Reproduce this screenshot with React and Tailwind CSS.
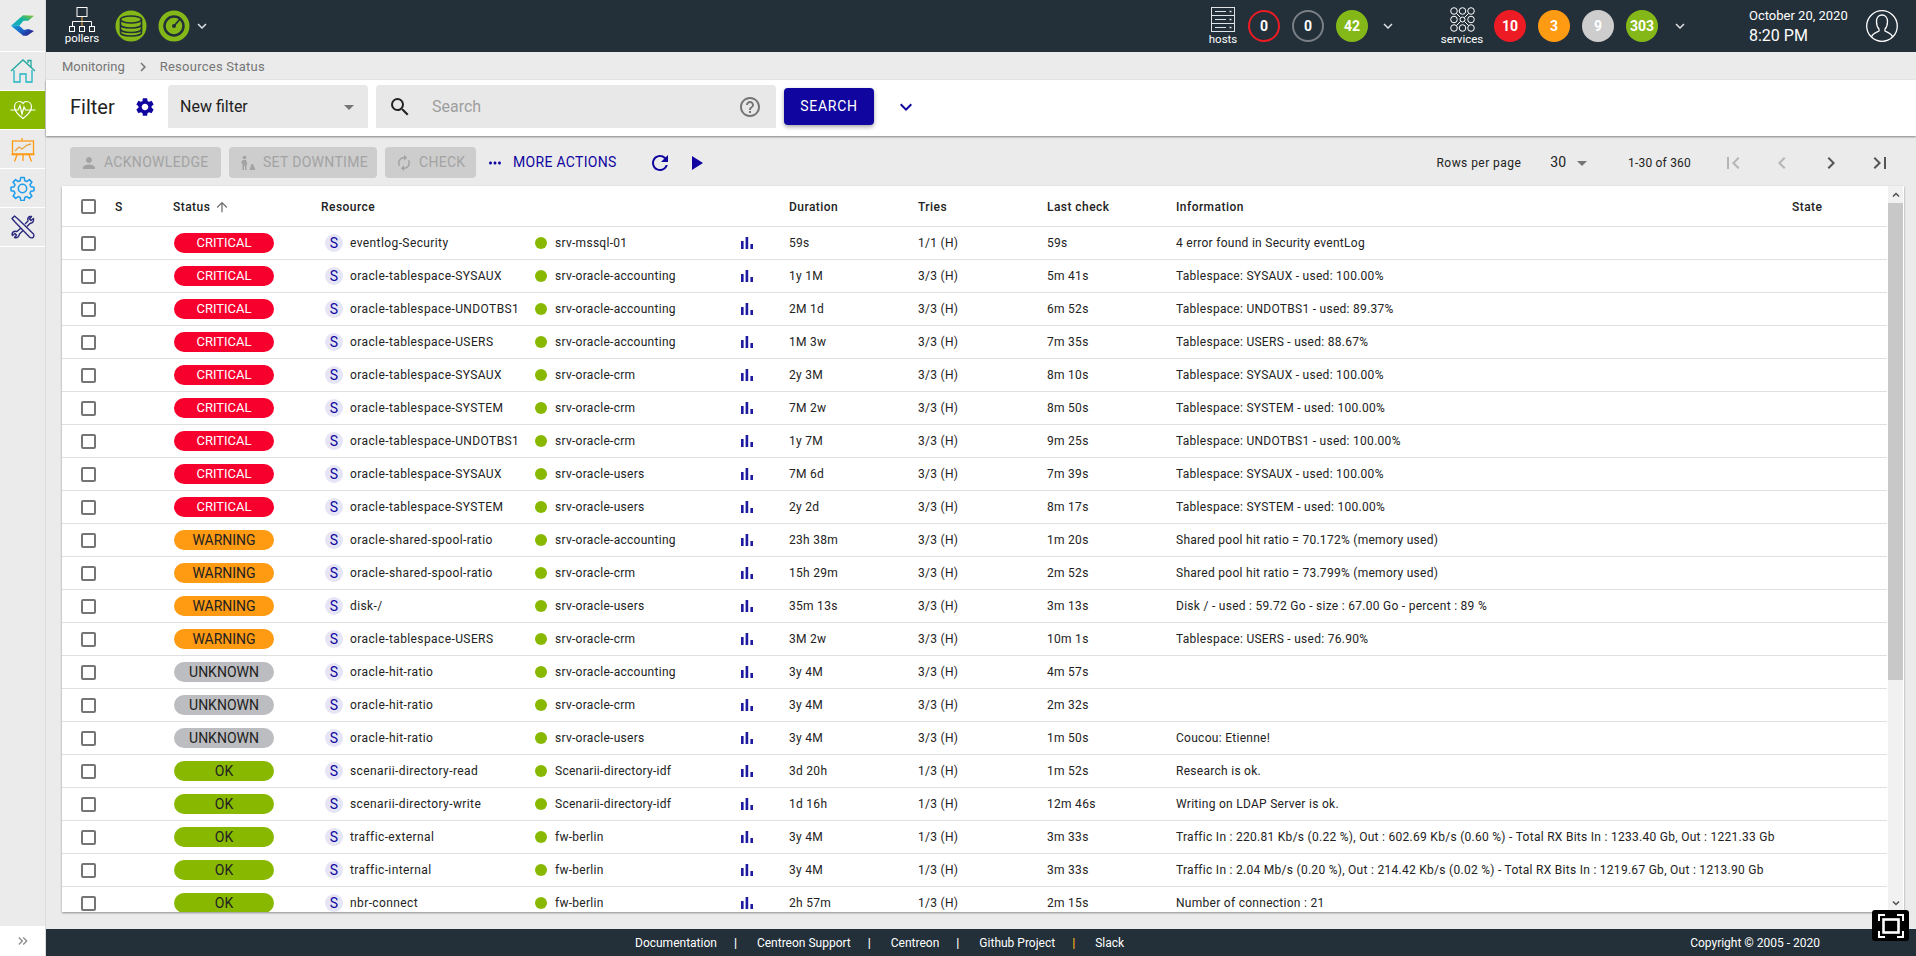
import React from "react";
import {
  MdSettings, MdSearch, MdHelpOutline, MdKeyboardArrowDown, MdPerson, MdAutorenew, MdMoreHoriz, MdRefresh,
  MdPlayArrow, MdArrowUpward, MdFirstPage, MdChevronLeft, MdChevronRight, MdLastPage, MdArrowDropDown, MdKeyboardDoubleArrowRight,
} from "react-icons/md";

const rows = [
  ["CRITICAL", "eventlog-Security", "srv-mssql-01", "59s", "1/1 (H)", "59s", "4 error found in Security eventLog"],
  ["CRITICAL", "oracle-tablespace-SYSAUX", "srv-oracle-accounting", "1y 1M", "3/3 (H)", "5m 41s", "Tablespace: SYSAUX - used: 100.00%"],
  ["CRITICAL", "oracle-tablespace-UNDOTBS1", "srv-oracle-accounting", "2M 1d", "3/3 (H)", "6m 52s", "Tablespace: UNDOTBS1 - used: 89.37%"],
  ["CRITICAL", "oracle-tablespace-USERS", "srv-oracle-accounting", "1M 3w", "3/3 (H)", "7m 35s", "Tablespace: USERS - used: 88.67%"],
  ["CRITICAL", "oracle-tablespace-SYSAUX", "srv-oracle-crm", "2y 3M", "3/3 (H)", "8m 10s", "Tablespace: SYSAUX - used: 100.00%"],
  ["CRITICAL", "oracle-tablespace-SYSTEM", "srv-oracle-crm", "7M 2w", "3/3 (H)", "8m 50s", "Tablespace: SYSTEM - used: 100.00%"],
  ["CRITICAL", "oracle-tablespace-UNDOTBS1", "srv-oracle-crm", "1y 7M", "3/3 (H)", "9m 25s", "Tablespace: UNDOTBS1 - used: 100.00%"],
  ["CRITICAL", "oracle-tablespace-SYSAUX", "srv-oracle-users", "7M 6d", "3/3 (H)", "7m 39s", "Tablespace: SYSAUX - used: 100.00%"],
  ["CRITICAL", "oracle-tablespace-SYSTEM", "srv-oracle-users", "2y 2d", "3/3 (H)", "8m 17s", "Tablespace: SYSTEM - used: 100.00%"],
  ["WARNING", "oracle-shared-spool-ratio", "srv-oracle-accounting", "23h 38m", "3/3 (H)", "1m 20s", "Shared pool hit ratio = 70.172% (memory used)"],
  ["WARNING", "oracle-shared-spool-ratio", "srv-oracle-crm", "15h 29m", "3/3 (H)", "2m 52s", "Shared pool hit ratio = 73.799% (memory used)"],
  ["WARNING", "disk-/", "srv-oracle-users", "35m 13s", "3/3 (H)", "3m 13s", "Disk / - used : 59.72 Go - size : 67.00 Go - percent : 89 %"],
  ["WARNING", "oracle-tablespace-USERS", "srv-oracle-crm", "3M 2w", "3/3 (H)", "10m 1s", "Tablespace: USERS - used: 76.90%"],
  ["UNKNOWN", "oracle-hit-ratio", "srv-oracle-accounting", "3y 4M", "3/3 (H)", "4m 57s", ""],
  ["UNKNOWN", "oracle-hit-ratio", "srv-oracle-crm", "3y 4M", "3/3 (H)", "2m 32s", ""],
  ["UNKNOWN", "oracle-hit-ratio", "srv-oracle-users", "3y 4M", "3/3 (H)", "1m 50s", "Coucou: Etienne!"],
  ["OK", "scenarii-directory-read", "Scenarii-directory-idf", "3d 20h", "1/3 (H)", "1m 52s", "Research is ok."],
  ["OK", "scenarii-directory-write", "Scenarii-directory-idf", "1d 16h", "1/3 (H)", "12m 46s", "Writing on LDAP Server is ok."],
  ["OK", "traffic-external", "fw-berlin", "3y 4M", "1/3 (H)", "3m 33s", "Traffic In : 220.81 Kb/s (0.22 %), Out : 602.69 Kb/s (0.60 %) - Total RX Bits In : 1233.40 Gb, Out : 1221.33 Gb"],
  ["OK", "traffic-internal", "fw-berlin", "3y 4M", "1/3 (H)", "3m 33s", "Traffic In : 2.04 Mb/s (0.20 %), Out : 214.42 Kb/s (0.02 %) - Total RX Bits In : 1219.67 Gb, Out : 1213.90 Gb"],
  ["OK", "nbr-connect", "fw-berlin", "2h 57m", "1/3 (H)", "2m 15s", "Number of connection : 21"],
];

const chipClass = {
  CRITICAL: "bg-[#f7002e] text-white text-[13px]",
  WARNING: "bg-[#ff9a13] text-[#222] text-[14px]",
  UNKNOWN: "bg-[#bcbdc0] text-[#222] text-[14px]",
  OK: "bg-[#88b900] text-[#222] text-[14px]",
};

const gridCols = "grid grid-cols-[53px_58px_148px_214px_206px_48px_129px_129px_129px_616px_1fr]";

function Logo() {
  return (
    <svg width="23" height="21" viewBox="11 16 23 21">
      <defs>
        <linearGradient id="lt" x1="0" y1="1" x2="1" y2="0">
          <stop offset="0" stopColor="#12a8c8" />
          <stop offset="0.55" stopColor="#12b4a4" />
          <stop offset="1" stopColor="#8fc31f" />
        </linearGradient>
        <linearGradient id="lb" x1="0" y1="0" x2="1" y2="0.6">
          <stop offset="0" stopColor="#12a8d8" />
          <stop offset="0.55" stopColor="#1a62c8" />
          <stop offset="1" stopColor="#2a2590" />
        </linearGradient>
      </defs>
      <path d="M11 26.7 L23 16.2 L34 16.7 L28.3 21.7 L23.5 21.7 L19.3 26.7 Z" fill="url(#lt)" />
      <path d="M11 26.7 L19.3 26.7 L24 31 L28.3 30 L34 32 L27 36.7 L23.3 36.7 Z" fill="url(#lb)" />
    </svg>
  );
}

function HomeIcon() {
  return (
    <svg width="26" height="24" viewBox="0 0 26 24" fill="none" strokeWidth="1.3">
      <path d="M1 12 L13 1 L25 12" stroke="#20a8a0" />
      <path d="M18 4 V1.5 H21 V8" stroke="#20a8a0" />
      <path d="M4 11 V23 H10 V15 H16 V23 H22 V11" stroke="#1fb5c4" />
    </svg>
  );
}
function HeartIcon() {
  return (
    <svg width="26" height="20" viewBox="0 0 26 20" fill="none" stroke="#fff" strokeWidth="1.2">
      <path d="M13 18.5 C7 14 4.5 11 4.5 7 C4.5 3.5 7 1.5 9.5 1.5 C11 1.5 12.3 2.2 13 3.5 C13.7 2.2 15 1.5 16.5 1.5 C19 1.5 21.5 3.5 21.5 7 C21.5 11 19 14 13 18.5 Z" />
      <path d="M0.5 10 H8 L10 5.5 L12 14 L14 7 L15.5 10 H25.5" />
    </svg>
  );
}
function BoardIcon() {
  return (
    <svg width="24" height="25" viewBox="0 0 24 25" fill="none" stroke="#ff9a13" strokeWidth="1.3">
      <path d="M11 1 V3.5" />
      <rect x="1.5" y="4" width="21" height="13" />
      <path d="M0.5 17.5 H23.5" strokeWidth="1.6" />
      <path d="M4 14 L8 10 L11 12 L16 8 L20 7" stroke="#e8a33c" />
      <path d="M6 18 L3.5 24.5 M12 18 V24 M18 18 L20.5 24.5" />
    </svg>
  );
}
function GearIcon() {
  return (
    <svg width="25" height="25" viewBox="0 0 24 24" fill="none" stroke="#1e9eec" strokeWidth="1.5" strokeLinejoin="round">
      <circle cx="12" cy="12" r="4" />
      <path d="M10.3 1.5 h3.4 l.5 3 1.9.8 2.5-1.8 2.4 2.4-1.8 2.5.8 1.9 3 .5 v3.4 l-3 .5-.8 1.9 1.8 2.5-2.4 2.4-2.5-1.8-1.9.8-.5 3 h-3.4 l-.5-3-1.9-.8-2.5 1.8-2.4-2.4 1.8-2.5-.8-1.9-3-.5 v-3.4 l3-.5.8-1.9-1.8-2.5 2.4-2.4 2.5 1.8 1.9-.8 z" />
    </svg>
  );
}
function ToolsIcon() {
  return (
    <svg width="24" height="24" viewBox="0 0 24 24" fill="none" stroke="#2b2a7f" strokeWidth="1.4" strokeLinejoin="round">
      <path d="M1 3.5 L3.5 1 L7 4 L22.5 19 Q23.5 21 22 22.5 Q20 23.5 18.5 22 L4 7 Z" />
      <path d="M14 9 L17 6 Q16 2.5 19 1.5 L20.5 1.5 L18.5 4 L20 5.5 L22.5 3.5 Q23.5 7.5 19 8.5 L16 11.5" />
      <path d="M10 13 L6 16.5 Q2 15.5 1 19 L1.5 20.5 L4 18.5 L5.5 20 L3.5 22.5 Q7.5 23.5 8.5 19 L12 15.5" />
    </svg>
  );
}
function PollerIcon() {
  return (
    <svg width="28" height="25" viewBox="0 0 28 25" fill="none" stroke="#fff" strokeWidth="1">
      <rect x="9" y="0.5" width="10" height="9" />
      <path d="M14 10 V19" stroke="#f5b042" />
      <path d="M4.5 19 V14.5 H23.5 V19" />
      <rect x="1.5" y="19.5" width="5" height="5" />
      <rect x="11.5" y="19.5" width="5" height="5" />
      <rect x="21.5" y="19.5" width="5" height="5" />
    </svg>
  );
}
function DbIcon() {
  return (
    <svg width="32" height="32" viewBox="0 0 32 32">
      <circle cx="16" cy="16" r="15.5" fill="#84b819" />
      <g fill="none" stroke="#232f39" strokeWidth="1.6">
        <ellipse cx="16" cy="9.5" rx="10.5" ry="3.5" />
        <path d="M5.5 9.5 V22.5 C5.5 24.5 10 26 16 26 C22 26 26.5 24.5 26.5 22.5 V9.5" />
        <path d="M5.5 14.5 C5.5 16.5 10 18 16 18 C22 18 26.5 16.5 26.5 14.5" />
        <path d="M5.5 19 C5.5 21 10 22.5 16 22.5 C22 22.5 26.5 21 26.5 19" />
      </g>
    </svg>
  );
}
function GaugeIcon() {
  return (
    <svg width="32" height="32" viewBox="0 0 32 32">
      <circle cx="16" cy="16" r="15.5" fill="#84b819" />
      <circle cx="16" cy="16" r="9.5" fill="none" stroke="#232f39" strokeWidth="2.5" />
      <circle cx="16" cy="16" r="2" fill="#232f39" />
      <path d="M16 16 L22 9" stroke="#232f39" strokeWidth="1.8" />
    </svg>
  );
}
function HostsIcon() {
  return (
    <svg width="24" height="25" viewBox="0 0 24 25" fill="none" stroke="#dfe3e6" strokeWidth="1">
      <rect x="0.5" y="0.5" width="23" height="24" />
      <path d="M0.5 8.5 H23.5 M0.5 16.5 H23.5" />
      <path d="M4 4.5 H15 M4 12.5 H15 M4 20.5 H15" strokeWidth="1.2" />
      <path d="M18.5 4.5 H20.5 M18.5 12.5 H20.5 M18.5 20.5 H20.5" strokeWidth="1.4" />
    </svg>
  );
}
function ServicesIcon() {
  const pts = [4, 12.5, 21];
  return (
    <svg width="25" height="25" viewBox="0 0 25 25" fill="none" stroke="#fff" strokeWidth="1">
      {pts.map((y) => pts.map((x) => <circle key={`${x}-${y}`} cx={x} cy={y} r={x === 12.5 && y === 12.5 ? 2.5 : 3.3} />))}
      <path d="M6.5 6.5 L10.5 10.5 M18.5 6.5 L14.5 10.5 M6.5 18.5 L10.5 14.5 M18.5 18.5 L14.5 14.5" />
    </svg>
  );
}
function UserIcon() {
  return (
    <svg width="32" height="32" viewBox="0 0 32 32" fill="none" stroke="#fff" strokeWidth="1.3">
      <circle cx="16" cy="16" r="15.3" />
      <path d="M5.5 27 C6.5 23 11 22.5 13 21 V19 C11 17 10.5 14 10.5 11.5 C10.5 7.5 13 5 16 5 C19 5 21.5 7.5 21.5 11.5 C21.5 14 21 17 19 19 V21 C21 22.5 25.5 23 26.5 27" />
    </svg>
  );
}
function DowntimeIcon() {
  return (
    <svg width="18" height="16" viewBox="0 0 16 16" fill="#a3a3a3">
      <circle cx="4.5" cy="2.5" r="1.8" />
      <path d="M2.5 5 H6 L7.5 9 L6.5 9.5 V15 H5 V11 H4 V15 H2.5 V9 L1 8 Z" />
      <path d="M9.5 15 L11.5 9 H13 L15.5 15 Z" />
    </svg>
  );
}
function GraphIcon() {
  return (
    <svg width="12" height="12" viewBox="0 0 12 12" fill="#1d1aa0">
      <rect x="0" y="4" width="2.6" height="8" />
      <rect x="4.6" y="0" width="2.6" height="12" />
      <rect x="9.4" y="7" width="2.6" height="5" />
    </svg>
  );
}
function FullscreenIcon() {
  return (
    <svg width="26" height="24" viewBox="0 0 26 24" fill="none" stroke="#fff" strokeWidth="2">
      <path d="M1 7 V1 H7 M19 1 H25 V7 M25 17 V23 H19 M7 23 H1 V17" />
      <rect x="5.5" y="5.5" width="15" height="13" strokeWidth="2.6" />
    </svg>
  );
}

function SideItem({ children, active, last }) {
  return (
    <div className={`h-[39px] flex items-center justify-center ${active ? "bg-[#88b900]" : ""} ${last ? "" : "border-b border-white"}`}>
      {children}
    </div>
  );
}

function Badge({ n, cls }) {
  return (
    <div className={`w-8 h-8 rounded-full flex items-center justify-center text-[14px] font-bold text-white ${cls}`}>{n}</div>
  );
}

function ActionButton({ icon, label, width }) {
  return (
    <div className={`h-[31px] ${width} rounded bg-[#cdcdcd] flex items-center pl-[10px] gap-[6px] text-[14px] tracking-[0.3px] text-[#a3a3a3]`}>
      {icon}
      <span>{label}</span>
    </div>
  );
}

function Checkbox() {
  return <div className="w-[15px] h-[15px] border-2 border-[#757575] rounded-[2px] ml-[19px]" />;
}

function Row({ r }) {
  return (
    <div className={`${gridCols} h-[33px] items-center border-b border-[#e0e0e0] text-[12px] tracking-[0.28px] text-[#222]`}>
      <Checkbox />
      <div />
      <div className={`w-[100px] h-[20px] ml-[1px] rounded-full flex items-center justify-center tracking-normal ${chipClass[r[0]]}`}>{r[0]}</div>
      <div className="flex items-center">
        <div className="w-[18px] h-[18px] ml-[4px] mr-[7px] rounded-full bg-[#e5e5f5] text-[#10069f] text-[14px] flex items-center justify-center">S</div>
        <span className="whitespace-nowrap tracking-[0.4px]">{r[1]}</span>
      </div>
      <div className="flex items-center">
        <div className="w-3 h-3 rounded-full bg-[#88b900] mr-2" />
        <span>{r[2]}</span>
      </div>
      <div><GraphIcon /></div>
      <div>{r[3]}</div>
      <div>{r[4]}</div>
      <div>{r[5]}</div>
      <div className="whitespace-nowrap">{r[6]}</div>
      <div />
    </div>
  );
}

export default function App() {
  return (
    <div className="relative w-full h-screen overflow-hidden flex bg-[#ebebeb] font-[family-name:Roboto,sans-serif]">
      <aside className="w-[46px] shrink-0 flex flex-col border-r border-[#dcdcdc]">
        <div className="h-[52px] flex items-center justify-center border-b border-white"><Logo /></div>
        <SideItem><HomeIcon /></SideItem>
        <SideItem active><HeartIcon /></SideItem>
        <SideItem><BoardIcon /></SideItem>
        <SideItem><GearIcon /></SideItem>
        <SideItem><ToolsIcon /></SideItem>
        <div className="mt-auto h-[30px] bg-white flex items-center justify-center text-[#8c8c8c]">
          <MdKeyboardDoubleArrowRight size={16} />
        </div>
      </aside>

      <main className="flex-1 min-w-0 flex flex-col">
        <header className="h-[52px] bg-[#232f39] flex items-center text-white shrink-0">
          <div className="w-[72px] flex flex-col items-center">
            <PollerIcon />
            <span className="text-[11.5px] leading-[13px]">pollers</span>
          </div>
          <div className="ml-[-3px]"><DbIcon /></div>
          <div className="ml-[11px]"><GaugeIcon /></div>
          <MdKeyboardArrowDown size={18} className="ml-[3px] text-[#dfe3e6]" />
          <div className="flex-1" />
          <div className="w-[24px] flex flex-col items-center mr-[13px]">
            <HostsIcon />
            <span className="text-[11.5px] leading-[13px] mt-[1px]">hosts</span>
          </div>
          <div className="flex gap-3">
            <Badge n="0" cls="border-2 border-[#ed1c24]" />
            <Badge n="0" cls="border-2 border-[#7a7f85]" />
            <Badge n="42" cls="bg-[#84b819]" />
          </div>
          <MdKeyboardArrowDown size={18} className="ml-[11px] text-[#dfe3e6]" />
          <div className="w-[40px] flex flex-col items-center ml-[45px] mr-[12px]">
            <ServicesIcon />
            <span className="text-[11.5px] leading-[13px] mt-[1px]">services</span>
          </div>
          <div className="flex gap-3">
            <Badge n="10" cls="bg-[#ed1c24]" />
            <Badge n="3" cls="bg-[#ff9a13]" />
            <Badge n="9" cls="bg-[#cdcdcd]" />
            <Badge n="303" cls="bg-[#84b819]" />
          </div>
          <MdKeyboardArrowDown size={18} className="ml-[13px] text-[#dfe3e6]" />
          <div className="ml-[60px] w-[117px] flex flex-col">
            <span className="text-[13px] leading-[20px]">October 20, 2020</span>
            <span className="text-[16px] leading-[20px]">8:20 PM</span>
          </div>
          <div className="mr-[18px]"><UserIcon /></div>
        </header>

        <nav className="h-[28px] shrink-0 flex items-center pl-[16px] pt-[2px] text-[13px] text-[#757575]">
          <span>Monitoring</span>
          <MdChevronRight size={18} className="ml-[9px] mr-[8px] text-[#757575]" />
          <span className="tracking-[0.25px]">Resources Status</span>
        </nav>

        <section className="h-[56px] shrink-0 bg-white shadow-[0_1px_2px_rgba(0,0,0,0.45)] flex items-center pl-[24px] pb-[3px] relative">
          <span className="text-[20px] text-[#222] w-[64px]">Filter</span>
          <MdSettings size={22} className="text-[#10069f]" />
          <div className="ml-[12px] w-[200px] h-[43px] rounded-t bg-[#e8e8e8] flex items-center pl-[12px] pr-[7px] text-[16px] text-[#222]">
            <span className="flex-1">New filter</span>
            <MdArrowDropDown size={24} className="text-[#757575]" />
          </div>
          <div className="ml-[8px] w-[400px] h-[43px] rounded-t bg-[#e8e8e8] flex items-center pl-[12px] pr-[12px]">
            <MdSearch size={24} className="text-[#222]" />
            <span className="ml-[20px] flex-1 text-[16px] text-[#9e9e9e]">Search</span>
            <MdHelpOutline size={24} className="text-[#757575] -translate-x-[2px]" />
          </div>
          <div className="ml-[8px] w-[90px] h-[37px] rounded bg-[#10069f] text-white text-[14px] tracking-[0.7px] flex items-center justify-center shadow-[0_2px_4px_rgba(0,0,0,0.35)]">SEARCH</div>
          <MdKeyboardArrowDown size={24} className="ml-[20px] text-[#10069f]" />
        </section>

        <section className="h-[50px] shrink-0 flex items-center pl-[24px] pr-[24px] pt-[3px]">
          <div className="flex gap-[8px]">
            <ActionButton width="w-[151px]" label="ACKNOWLEDGE" icon={<MdPerson size={18} className="text-[#a3a3a3]" />} />
            <ActionButton width="w-[148px]" label="SET DOWNTIME" icon={<DowntimeIcon />} />
            <ActionButton width="w-[91px]" label="CHECK" icon={<MdAutorenew size={18} className="text-[#a3a3a3]" />} />
          </div>
          <MdMoreHoriz size={18} className="ml-[10px] text-[#10069f]" />
          <span className="ml-[9px] text-[14px] tracking-[0.3px] text-[#10069f]">MORE ACTIONS</span>
          <MdRefresh size={24} className="ml-[31px] text-[#10069f]" />
          <MdPlayArrow size={24} className="ml-[12px] text-[#10069f]" />
          <div className="flex-1" />
          <span className="text-[12px] tracking-[0.45px] text-[#222]">Rows per page</span>
          <span className="ml-[29px] text-[14px] text-[#222]">30</span>
          <MdArrowDropDown size={24} className="ml-[4px] text-[#757575]" />
          <span className="ml-[34px] text-[12px] tracking-[0.2px] text-[#222]">1-30 of 360</span>
          <div className="ml-[30px] flex gap-[25px]">
            <MdFirstPage size={24} className="text-[#b5b5b5]" />
            <MdChevronLeft size={24} className="text-[#b5b5b5]" />
            <MdChevronRight size={24} className="text-[#555]" />
            <MdLastPage size={24} className="text-[#555]" />
          </div>
        </section>

        <section className="flex-1 min-h-0 pl-[16px] pr-[12px] pb-[17px]">
          <div className="h-full bg-white shadow-[0_1px_2px_rgba(0,0,0,0.4)] flex overflow-hidden">
            <div className="flex-1 min-w-0 overflow-hidden">
              <div className={`${gridCols} h-[41px] pt-[1px] items-center border-b border-[#e0e0e0] text-[12px] font-medium tracking-[0.45px] text-[#222]`}>
                <Checkbox />
                <div>S</div>
                <div className="flex items-center gap-1">Status <MdArrowUpward size={16} className="text-[#757575]" /></div>
                <div>Resource</div>
                <div />
                <div />
                <div>Duration</div>
                <div>Tries</div>
                <div>Last check</div>
                <div>Information</div>
                <div>State</div>
              </div>
              {rows.map((r, i) => <Row key={i} r={r} />)}
            </div>
            <div className="w-[15px] mx-[1px] shrink-0 bg-[#f1f1f1] flex flex-col items-center">
              <div className="h-[17px] flex items-center justify-center">
                <svg width="8" height="5" viewBox="0 0 8 5" fill="none" stroke="#505050" strokeWidth="1.5"><path d="M1 4.5 L4 1.5 L7 4.5" /></svg>
              </div>
              <div className="w-full h-[477px] bg-[#c8c8c8]" />
              <div className="flex-1" />
              <div className="h-[17px] flex items-center justify-center">
                <svg width="8" height="5" viewBox="0 0 8 5" fill="none" stroke="#505050" strokeWidth="1.5"><path d="M1 0.5 L4 3.5 L7 0.5" /></svg>
              </div>
            </div>
          </div>
        </section>

        <footer className="h-[27px] shrink-0 bg-[#232f39] flex items-center text-white text-[12px]">
          <div className="ml-[589px] flex items-center">
            <span>Documentation</span>
            <span className="ml-[17px] mr-[20px] font-bold">|</span>
            <span>Centreon Support</span>
            <span className="ml-[17px] mr-[20px] font-bold">|</span>
            <span>Centreon</span>
            <span className="ml-[17px] mr-[20px] font-bold">|</span>
            <span>Github Project</span>
            <span className="ml-[17px] mr-[20px] font-bold text-[#ffb31a]">|</span>
            <span>Slack</span>
          </div>
          <span className="ml-auto mr-[96px]">Copyright © 2005 - 2020</span>
        </footer>
      </main>

      <div className="absolute left-[1872px] top-[910px] w-[37px] h-[31px] rounded-[3px] bg-black flex items-center justify-center">
        <FullscreenIcon />
      </div>
    </div>
  );
}
